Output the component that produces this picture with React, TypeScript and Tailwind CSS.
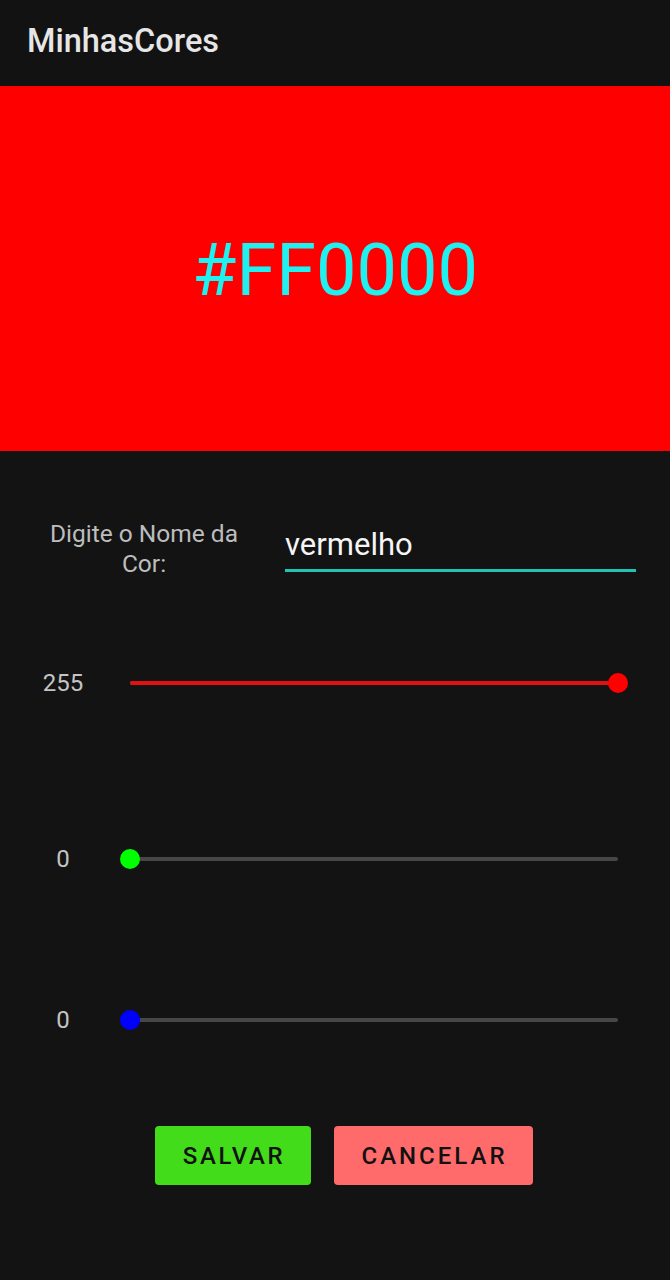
import React from "react";

const sliders = [
  { value: 255, thumb: "bg-[#ff0000]", fill: "bg-[#e31212]", mt: "mt-[89px]" },
  { value: 0, thumb: "bg-[#00ff00]", fill: "bg-[#00ff00]", mt: "mt-[146px]" },
  { value: 0, thumb: "bg-[#0000ff]", fill: "bg-[#0000ff]", mt: "mt-[131px]" },
];

function Slider({ value, thumb, fill, mt }: { value: number; thumb: string; fill: string; mt: string }) {
  const pct = (value / 255) * 100;
  return (
    <div className={`flex h-[30px] items-center pl-[30px] pr-[42px] ${mt}`}>
      <span className="w-[66px] text-center text-[24px] leading-[30px] text-[#c4c4c4]">{value}</span>
      <div className="relative ml-[24px] flex h-[30px] flex-1 items-center px-[10px]">
        <div className="relative h-[4px] w-full rounded-full bg-[#474747]">
          <div className={`absolute left-0 top-0 h-[4px] rounded-full ${fill}`} style={{ width: `${pct}%` }} />
          <div
            className={`absolute top-1/2 h-[20px] w-[20px] -translate-x-1/2 -translate-y-1/2 rounded-full ${thumb}`}
            style={{ left: `${pct}%` }}
          />
        </div>
      </div>
    </div>
  );
}

export default function App() {
  return (
    <div className="min-h-[1280px] w-full bg-[#131313] font-['Roboto',sans-serif]">
      <header className="flex h-[86px] items-center bg-[#121212] px-[27px] pb-[4px]">
        <h1 className="text-[32.5px] font-medium text-[#e6e6e6]">MinhasCores</h1>
      </header>

      <section className="flex h-[365px] items-center justify-center bg-[#ff0000] pt-[4px]">
        <span className="text-[72px] text-[#1ff0f0]">#FF0000</span>
      </section>

      <div className="mt-[68px] flex items-start pl-[28px] pr-[34px]">
        <label className="w-[232px] text-center text-[24.5px] leading-[30px] text-[#bdbdbd]">
          Digite o Nome da Cor:
        </label>
        <div className="ml-[25px] mt-[8px] flex-1 border-b-[3px] border-[#24c2b2] pb-[6px]">
          <span className="block text-[31px] leading-[36px] text-[#f5f5f5]">vermelho</span>
        </div>
      </div>

      {sliders.map((s, i) => (
        <Slider key={i} {...s} />
      ))}

      <div className="mt-[91px] flex justify-center gap-[23px] pl-[18px]">
        <button className="h-[59px] w-[156px] rounded-[4px] bg-[#42dc1b] pl-[2px] text-[24px] font-medium tracking-[2.6px] text-[#111]">
          SALVAR
        </button>
        <button className="h-[59px] w-[199px] rounded-[4px] bg-[#ff6b6b] pl-[2px] text-[24px] font-medium tracking-[3px] text-[#111]">
          CANCELAR
        </button>
      </div>
    </div>
  );
}
